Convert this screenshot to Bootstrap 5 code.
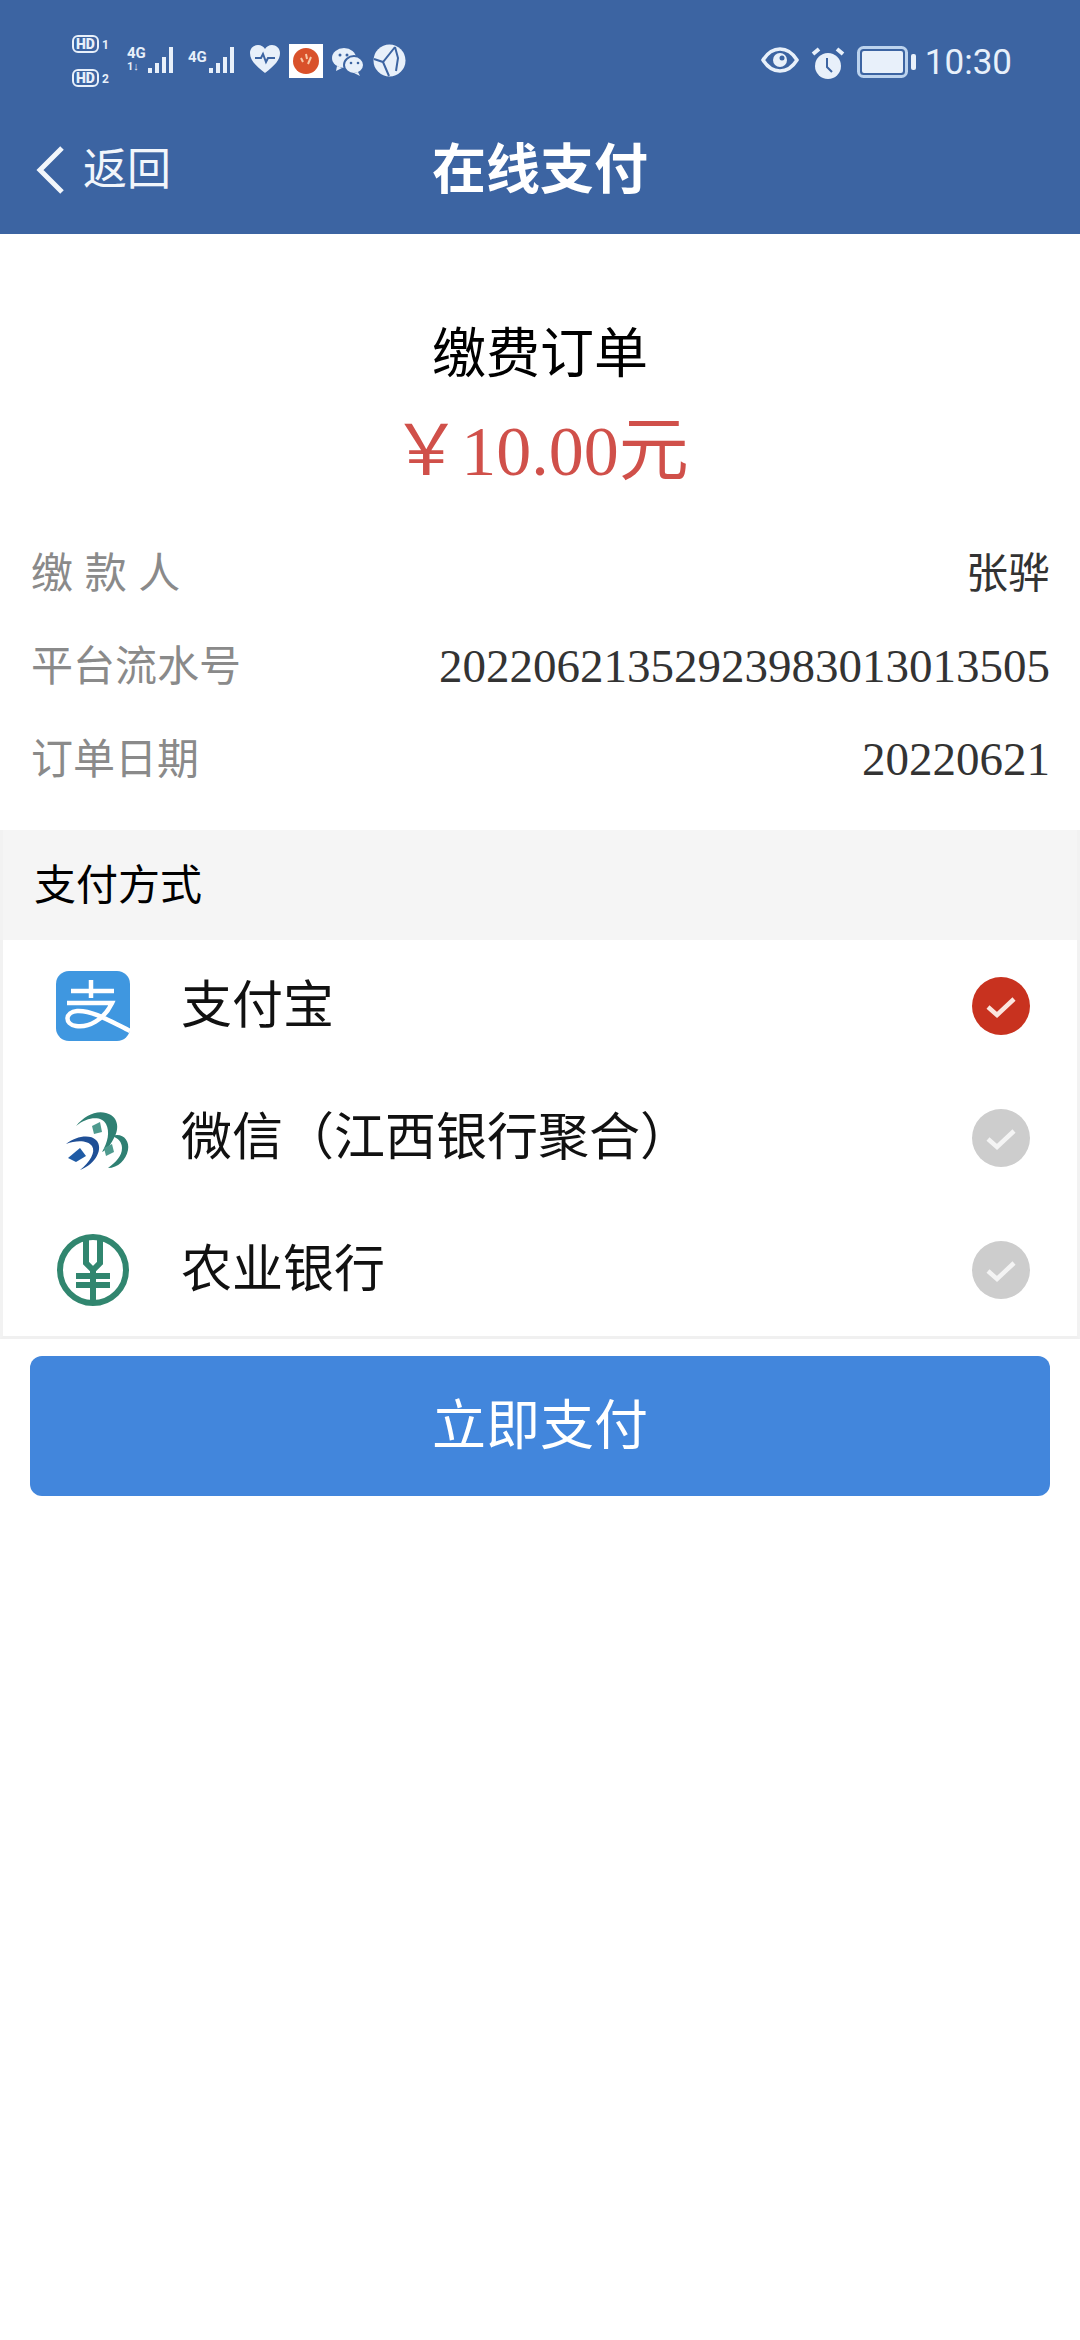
<!DOCTYPE html>
<html lang="zh-CN">
<head>
  <meta charset="UTF-8" />
  <meta name="viewport" content="width=device-width, initial-scale=1" />
  <title>在线支付</title>
  <link href="https://cdn.jsdelivr.net/npm/bootstrap@5.3.3/dist/css/bootstrap.min.css" rel="stylesheet" />
  <style>
    body {
      background: #fff;
      font-family: "Liberation Sans", "Noto Sans CJK SC", sans-serif;
      color: #000;
    }
    .top-blue { background: #3c64a2; height: 234px; color: #fff; }
    .status-row { height: 100px; padding: 35px 68px 0 72px; color: #e8f0fa; }
    .hd-col { width: 55px; }
    .hd-item { font: 700 16px/18px Roboto, sans-serif; height: 18px; }
    .hd-item b { border: 2px solid #e8f0fa; border-radius: 6px; padding: 0 2px; font-size: 14px; line-height: 14px; display: inline-block; height: 18px; }
    .hd-item i { font-style: normal; font-size: 12px; margin-left: 3px; }
    .sig-box { height: 30px; margin-top: 10px; }
    .net-col { width: 20px; }
    .net-label { font: 700 15px/16px Roboto, sans-serif; }
    .net-arrows { font: 700 11px/12px Roboto, sans-serif; }
    .sig-bars { width: 33px; height: 30px; }
    .st-left { margin-top: 9px; margin-left: 8px; }
    .st-right { margin-top: 11px; }
    .clock-text { font: 400 35px/44px Roboto, sans-serif; color: #e8f0fa; margin-top: 6px; }
    .nav-grid { display: grid; grid-template-columns: 1fr auto 1fr; height: 134px; padding-top: 6px; align-items: center; }
    .back-link { color: #f2f6fb; text-decoration: none; font-size: 44px; padding-left: 36px; gap: 17px; }
    .nav-title { font-size: 54px; font-weight: 700; line-height: 70px; }
    .order-title { font-size: 54px; line-height: 70px; padding-top: 85px; }
    .order-amount { font-family: "Liberation Serif", "Noto Sans CJK SC", serif; font-size: 70px; line-height: 80px; margin-top: 23px; margin-bottom: 35px; color: #d0504a; }
    .info-row { height: 93px; padding: 0 30px 0 31px; font-size: 42px; }
    .info-key { color: #8a8a8a; }
    .info-val { color: #333; font-family: "Liberation Serif", "Noto Sans CJK SC", serif; font-size: 47px; }
    .info-name { color: #333; font-size: 42px; }
    .pay-card { border: 0; border-left: 3px solid #f2f2f2; border-right: 3px solid #f2f2f2; border-bottom: 3px solid #f0f0f0; margin-top: 24px; }
    .pay-head { background: #f5f5f5; border: 0; height: 110px; padding: 0 31px; font-size: 42px; }
    .pay-item { border: 0; height: 132px; padding: 0 46px 0 51px; font-size: 51px; color: #111; }
    .pay-name { margin-left: 49px; }
    .pay-btn { background: #4286dc; border: 0; border-radius: 12px; height: 140px; margin: 17px 30px 0; width: 1020px; font-size: 54px; color: #fff; }
  </style>
</head>
<body>
  <div class="top-blue">
    <div class="status-row d-flex justify-content-between">
      <div class="d-flex align-items-start">
        <div class="hd-col d-flex flex-column gap-3">
          <div class="hd-item"><b>HD</b><i>1</i></div>
          <div class="hd-item"><b>HD</b><i>2</i></div>
        </div>
        <div class="sig-box d-flex">
          <div class="net-col d-flex flex-column">
            <span class="net-label">4G</span>
            <span class="net-arrows">1↓</span>
          </div>
          <svg class="sig-bars" viewBox="0 0 33 30"><g fill="#e8f0fa"><rect x="1" y="23" width="4" height="5"/><rect x="8" y="18" width="4" height="10"/><rect x="15" y="12" width="4" height="16"/><rect x="22" y="2" width="4" height="26"/></g></svg>
        </div>
        <div class="sig-box d-flex ms-2">
          <div class="net-col"><span class="net-label">4G</span></div>
          <svg class="sig-bars" viewBox="0 0 33 30"><g fill="#e8f0fa"><rect x="1" y="23" width="4" height="5"/><rect x="8" y="18" width="4" height="10"/><rect x="15" y="12" width="4" height="16"/><rect x="22" y="2" width="4" height="26"/></g></svg>
        </div>
        <svg class="st-left" width="32" height="30" viewBox="0 0 32 30"><path d="M16 29C6 21 1 16 1 9c0-5 4-8 8-8 3 0 6 2 7 4 1-2 4-4 7-4 4 0 8 3 8 8 0 7-5 12-15 20z" fill="#e8f0fa"/><path d="M6 14h6l2-4 3 8 2-4h7" fill="none" stroke="#3c64a2" stroke-width="2"/></svg>
        <svg class="st-left" width="34" height="34" viewBox="0 0 34 34"><rect width="34" height="34" fill="#fff"/><circle cx="17" cy="17" r="13" fill="#d9512a"/><path d="M12 14l2 4M17 10l1 5M22 13l-3 7" stroke="#f7c9a8" stroke-width="2"/></svg>
        <svg class="st-left" width="34" height="34" viewBox="0 0 34 34"><ellipse cx="13" cy="14" rx="12" ry="10" fill="#e8f0fa"/><ellipse cx="23" cy="21" rx="10" ry="9" fill="#e8f0fa" stroke="#3c64a2" stroke-width="2"/><path d="M6 22l-1 5 6-3zM27 28l2 4-6-3z" fill="#e8f0fa"/><circle cx="9" cy="11" r="1.500" fill="#3c64a2"/><circle cx="16" cy="11" r="1.500" fill="#3c64a2"/><circle cx="20" cy="19" r="1.300" fill="#3c64a2"/><circle cx="27" cy="19" r="1.300" fill="#3c64a2"/></svg>
        <svg class="st-left" width="33" height="33" viewBox="0 0 33 33"><circle cx="16.500" cy="16.500" r="16" fill="#e8f0fa"/><path d="M1 15l9 3 12-15M10 18l6 14M22 3l3 11-2 13" fill="none" stroke="#3c64a2" stroke-width="2"/></svg>
      </div>
      <div class="d-flex align-items-start gap-2">
        <svg class="st-right" width="38" height="28" viewBox="0 0 38 28"><path d="M2 14C7 6 13 3 19 3s12 3 17 11c-5 8-11 11-17 11S7 22 2 14z" fill="none" stroke="#e8f0fa" stroke-width="3.500"/><circle cx="19" cy="14" r="7" fill="#e8f0fa"/><circle cx="21" cy="12" r="2.500" fill="#3c64a2"/></svg>
        <svg class="st-right ms-1" width="34" height="34" viewBox="0 0 34 34"><circle cx="17" cy="20" r="13" fill="#e8f0fa"/><path d="M16 12v9l5 5" fill="none" stroke="#3c64a2" stroke-width="2"/><path d="M2 8l6-5M32 8l-6-5" stroke="#e8f0fa" stroke-width="4"/></svg>
        <svg class="st-right ms-1" width="60" height="32" viewBox="0 0 60 32"><rect x="1.500" y="1.500" width="48" height="29" rx="5" fill="none" stroke="#bcd3ee" stroke-width="3"/><rect x="5" y="5" width="41" height="22" rx="2" fill="#e8f0fa"/><rect x="54" y="8" width="5" height="16" rx="2" fill="#e8f0fa"/></svg>
        <span class="clock-text">10:30</span>
      </div>
    </div>
    <div class="nav-grid">
      <a class="back-link d-flex align-items-center" href="#">
        <svg width="30" height="50" viewBox="0 0 30 50"><path d="M26 3L4 25l22 22" fill="none" stroke="#f2f6fb" stroke-width="5"/></svg>
        <span>返回</span>
      </a>
      <div class="nav-title">在线支付</div>
      <div></div>
    </div>
  </div>

  <div class="text-center order-title">缴费订单</div>
  <div class="text-center order-amount">￥10.00元</div>

  <div class="info-row d-flex justify-content-between align-items-center">
    <span class="info-key">缴 款 人</span><span class="info-name">张骅</span>
  </div>
  <div class="info-row d-flex justify-content-between align-items-center">
    <span class="info-key">平台流水号</span><span class="info-val">20220621352923983013013505</span>
  </div>
  <div class="info-row d-flex justify-content-between align-items-center">
    <span class="info-key">订单日期</span><span class="info-val">20220621</span>
  </div>

  <div class="card rounded-0 pay-card">
    <div class="card-header rounded-0 pay-head d-flex align-items-center">支付方式</div>
    <ul class="list-group list-group-flush">
      <li class="list-group-item pay-item d-flex align-items-center">
        <svg width="78" height="72" viewBox="0 0 78 72"><rect x="2" y="1" width="74" height="70" rx="13" fill="#3f97e0"/><path d="M17 21h43M37 10v18M13 33h45C50 50 34 58 22 56 10 54 11 42 23 41c15-1 33 10 53 20" fill="none" stroke="#fff" stroke-width="4.500"/></svg>
        <span class="pay-name">支付宝</span>
        <svg class="ms-auto" width="60" height="60" viewBox="0 0 60 60"><circle cx="30" cy="30" r="29" fill="#c8321f"/><path d="M17 31l9 8 17-16" fill="none" stroke="#fbe6df" stroke-width="4.500"/></svg>
      </li>
      <li class="list-group-item pay-item d-flex align-items-center">
        <svg width="78" height="72" viewBox="0 0 78 72">
          <path d="M22 24C30 14 42 8 52 11c12 3 14 15 8 25-4 8-8 12-12 14 6-10 8-20 4-28-4-8-18-8-30 2z" fill="#2f8073"/>
          <path d="M12 42c10-8 24-10 30-4 8 8 0 24-16 30 10-8 16-18 12-24-4-6-16-6-26-2z" fill="#1f4f96"/>
          <path d="M58 34c10-4 18 4 16 14-2 10-10 18-20 18 8-6 14-12 14-20 0-6-4-10-10-12z" fill="#2f8073"/>
          <path d="M14 56l12-10 6 8-10 6z" fill="#1f5ba5"/>
          <path d="M38 24l8-4 2 10-8 2zM50 46l8-4 2 8-8 4z" fill="#4e9a8e"/>
        </svg>
        <span class="pay-name">微信（江西银行聚合）</span>
        <svg class="ms-auto" width="60" height="60" viewBox="0 0 60 60"><circle cx="30" cy="30" r="29" fill="#cdcdcd"/><path d="M17 31l9 8 17-16" fill="none" stroke="#f4f4f4" stroke-width="4.500"/></svg>
      </li>
      <li class="list-group-item pay-item d-flex align-items-center">
        <svg width="78" height="72" viewBox="0 0 78 72"><circle cx="39" cy="36" r="33" fill="none" stroke="#31866f" stroke-width="6"/><path d="M32 5v24l7 7 7-7V5M22 42h34M22 51h34M39 36v32" fill="none" stroke="#31866f" stroke-width="6"/></svg>
        <span class="pay-name">农业银行</span>
        <svg class="ms-auto" width="60" height="60" viewBox="0 0 60 60"><circle cx="30" cy="30" r="29" fill="#cdcdcd"/><path d="M17 31l9 8 17-16" fill="none" stroke="#f4f4f4" stroke-width="4.500"/></svg>
      </li>
    </ul>
  </div>

  <button type="button" class="btn pay-btn d-block">立即支付</button>

  <script src="https://cdn.jsdelivr.net/npm/bootstrap@5.3.3/dist/js/bootstrap.bundle.min.js"></script>
</body>
</html>
